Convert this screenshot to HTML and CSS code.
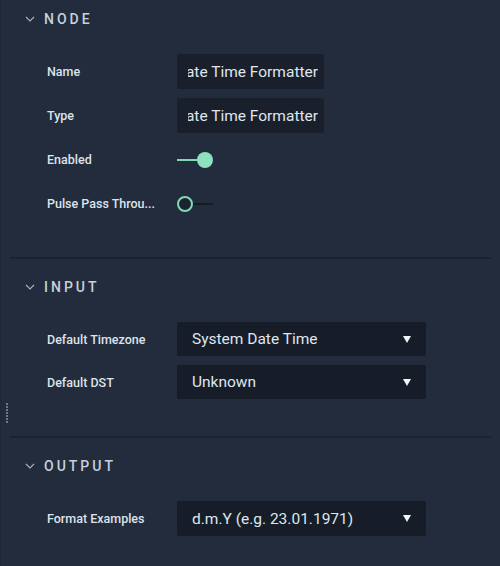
FILE: index.html
```html
<!DOCTYPE html>
<html>
<head>
<meta charset="utf-8">
<link rel="stylesheet" href="styles.css">
</head>
<body>
<div class="panel">
  <span class="grip"></span>
  <section class="section section-first">
    <div class="header">
      <svg class="chev" width="10" height="6" viewBox="0 0 10 6"><polyline points="1,1 5,5 9,1" fill="none" stroke="#aab3bf" stroke-width="1.1"/></svg>
      <span class="title">NODE</span>
    </div>
    <div class="rows">
      <div class="row">
        <div class="label">Name</div>
        <div class="text-input"><div class="clip"><span>Date Time Formatter</span></div></div>
      </div>
      <div class="row">
        <div class="label">Type</div>
        <div class="text-input"><div class="clip"><span>Date Time Formatter</span></div></div>
      </div>
      <div class="row">
        <div class="label">Enabled</div>
        <div class="toggle on"><span class="track"></span><span class="knob"></span></div>
      </div>
      <div class="row">
        <div class="label">Pulse Pass Throu...</div>
        <div class="toggle off"><span class="knob"></span><span class="track"></span></div>
      </div>
    </div>
  </section>
  <section class="section section-mid">
    <div class="header">
      <svg class="chev" width="10" height="6" viewBox="0 0 10 6"><polyline points="1,1 5,5 9,1" fill="none" stroke="#aab3bf" stroke-width="1.1"/></svg>
      <span class="title">INPUT</span>
    </div>
    <div class="rows rows-select">
      <div class="row">
        <div class="label">Default Timezone</div>
        <div class="select"><span>System Date Time</span><span class="arrow"></span></div>
      </div>
      <div class="row">
        <div class="label">Default DST</div>
        <div class="select"><span>Unknown</span><span class="arrow"></span></div>
      </div>
    </div>
  </section>
  <section class="section section-last">
    <div class="header">
      <svg class="chev" width="10" height="6" viewBox="0 0 10 6"><polyline points="1,1 5,5 9,1" fill="none" stroke="#aab3bf" stroke-width="1.1"/></svg>
      <span class="title">OUTPUT</span>
    </div>
    <div class="rows rows-select">
      <div class="row row-tall">
        <div class="label">Format Examples</div>
        <div class="select"><span>d.m.Y (e.g. 23.01.1971)</span><span class="arrow"></span></div>
      </div>
    </div>
  </section>
</div>
</body>
</html>
```

FILE: styles.css
```css
* { box-sizing: border-box; }
html, body {
  margin: 0;
  padding: 0;
  background: #222c3c;
}
body {
  font-family: Roboto, "Liberation Sans", sans-serif;
  color: #e0e5ec;
  width: 500px;
  height: 566px;
  overflow: hidden;
}
.panel {
  position: relative;
  height: 566px;
  border-left: 1px solid #1e2735;
}
.grip {
  position: absolute;
  left: 5px;
  top: 403px;
  width: 2px;
  height: 20px;
  background: repeating-linear-gradient(to bottom, #6f7884 0 2px, transparent 2px 3px);
}
.section {
  margin: 0 9px 0 9px;
  padding-top: 17px;
  border-bottom: 2px solid #1b2330;
}
.section-first { padding-top: 8px; padding-bottom: 36px; }
.section-mid { padding-bottom: 37px; }
.section-last { border-bottom: none; }
.header {
  height: 22px;
  display: flex;
  align-items: center;
  padding-left: 15px;
  margin-bottom: 24px;
}
.chev { margin-right: 9px; margin-top: -1px; }
.title {
  font-size: 14px;
  font-weight: 500;
  letter-spacing: 3px;
  color: #c9d0da;
}
.rows {
  display: flex;
  flex-direction: column;
  gap: 9px;
  padding-left: 37px;
}
.row {
  display: flex;
  align-items: center;
  height: 35px;
}
.rows-select .row { height: 34px; }
.rows-select .row-tall { height: 35px; }
.label {
  width: 130px;
  flex: none;
  font-size: 12.5px;
  font-weight: 500;
  color: #dde3ea;
  white-space: nowrap;
}
.text-input {
  width: 147px;
  height: 35px;
  background: #19202b;
  border-radius: 2px;
  padding: 0 6px 0 11px;
  display: flex;
  align-items: center;
}
.clip {
  width: 100%;
  overflow: hidden;
  display: flex;
  justify-content: flex-end;
  white-space: nowrap;
  font-size: 15.5px;
  color: #dfe6ef;
}
.clip span { flex: none; }
.toggle {
  position: relative;
  width: 36px;
  height: 16px;
  display: flex;
  align-items: center;
}
.toggle .track {
  flex: 1;
  height: 2px;
}
.toggle .knob {
  width: 16px;
  height: 16px;
  border-radius: 50%;
  flex: none;
}
.toggle.on .track { background: #7fd9b4; }
.toggle.on .knob { background: #8ee2bf; }
.toggle.off .track { background: #151b24; }
.toggle.off .knob { background: #1b2330; border: 2px solid #7fd9b4; }
.select {
  width: 249px;
  height: 100%;
  background: #161d28;
  border-radius: 2px;
  display: flex;
  align-items: center;
  justify-content: space-between;
  padding: 0 15px 0 15px;
  font-size: 15.5px;
  color: #dfe6ef;
}
.arrow {
  width: 0;
  height: 0;
  border-left: 4.5px solid transparent;
  border-right: 4.5px solid transparent;
  border-top: 7px solid #f2f4f7;
}
```
